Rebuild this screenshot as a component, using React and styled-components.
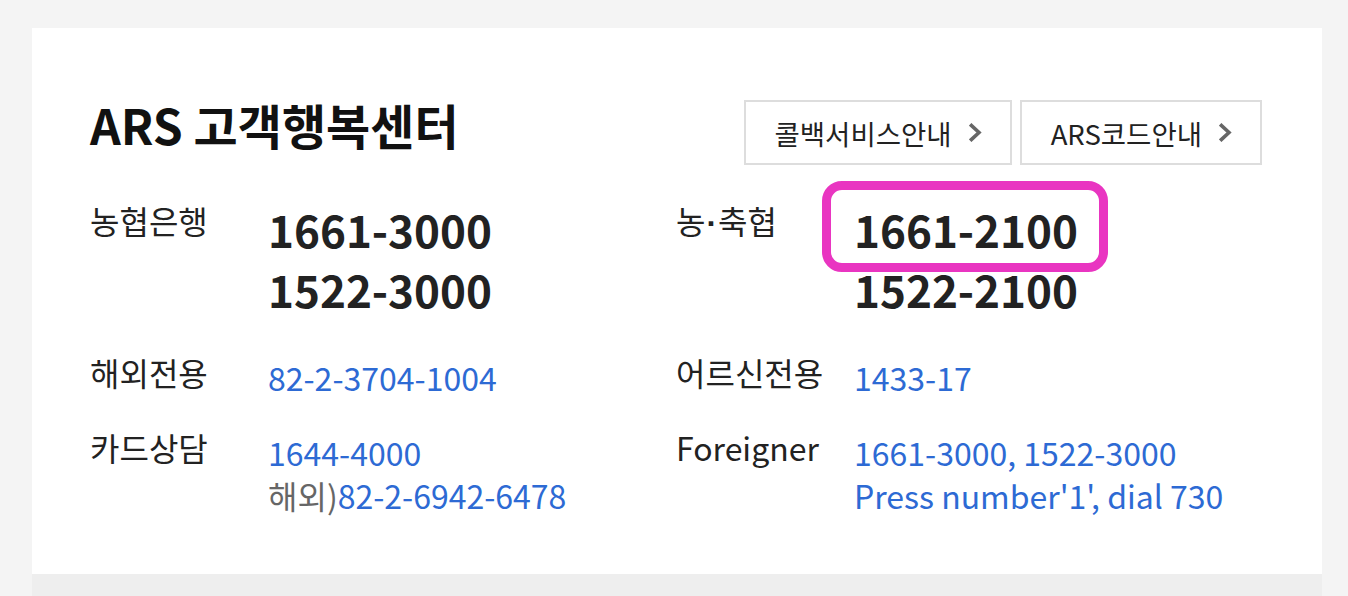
import React from 'react';
import styled, { createGlobalStyle } from 'styled-components';

const GlobalStyle = createGlobalStyle`
    body {
        margin: 0;
        background: #f4f4f4;
        font-family: "Noto Sans CJK KR", "Noto Sans", sans-serif;
        color: #222;
    }
`;

const Page = styled.div`
    padding: 28px 0 0 32px;
`;

const Card = styled.section`
    width: 1290px;
    box-sizing: border-box;
    padding: 72px 60px 57px 58px;
    background: #fff;
`;

const NextCard = styled.div`
    width: 1290px;
    height: 40px;
    background: #eeeeee;
`;

const Header = styled.div`
    display: flex;
    justify-content: space-between;
    align-items: flex-start;
`;

const Title = styled.h2`
    margin: 0;
    font-size: 48px;
    line-height: 48px;
    font-weight: 700;
    color: #111;
`;

const Buttons = styled.div`
    display: flex;
    gap: 8px;
`;

const LinkButton = styled.a`
    display: flex;
    align-items: center;
    gap: 17px;
    box-sizing: border-box;
    height: 65px;
    padding: 0 28px 0 29px;
    border: 2px solid #dddddd;
    background: #fff;
    font-size: 27.5px;
    color: #222;
    text-decoration: none;
`;

const Grid = styled.div`
    display: grid;
    grid-template-columns: 1fr 1fr;
    row-gap: 27px;
    margin-top: 34px;
`;

const Item = styled.div`
    display: flex;
    align-items: flex-start;
`;

const Label = styled.div`
    flex: 0 0 178px;
    font-size: 32px;
    line-height: 42px;
    color: #222;
`;

const Dot = styled.span`
    font-family: "Liberation Sans", sans-serif;
    font-weight: 700;
    margin: 0 1px;
`;

const Values = styled.div`
    display: flex;
    flex-direction: column;
    padding-top: ${({ $big }) => ($big ? '0' : '5px')};
    padding-bottom: ${({ $big }) => ($big ? '5px' : '0')};
`;

const BigNumber = styled.span`
    position: relative;
    align-self: flex-start;
    font-size: 44px;
    line-height: 60px;
    font-weight: 700;
    color: #222;
`;

const Highlight = styled.span`
    position: absolute;
    left: -32px;
    top: -18px;
    right: -30px;
    bottom: -13px;
    border: 9px solid #e935c1;
    border-radius: 20px;
    pointer-events: none;
`;

const Line = styled.span`
    font-size: 32px;
    line-height: 43px;
    color: ${({ $muted }) => ($muted ? '#666' : '#2d6ad4')};
`;

const Blue = styled.span`
    color: #2d6ad4;
`;

const Chevron = () => (
    <svg width="13" height="19" viewBox="0 0 13 19" fill="none">
        <path d="M2.5 2.5 L10 9.5 L2.5 16.5" stroke="#666" strokeWidth="3.6" strokeLinecap="square" />
    </svg>
);

const App = () => (
    <Page>
        <GlobalStyle />
        <Card>
            <Header>
                <Title>ARS 고객행복센터</Title>
                <Buttons>
                    <LinkButton href="#">콜백서비스안내 <Chevron /></LinkButton>
                    <LinkButton href="#">ARS코드안내 <Chevron /></LinkButton>
                </Buttons>
            </Header>
            <Grid>
                <Item>
                    <Label>농협은행</Label>
                    <Values $big>
                        <BigNumber>1661-3000</BigNumber>
                        <BigNumber>1522-3000</BigNumber>
                    </Values>
                </Item>
                <Item>
                    <Label>농<Dot>·</Dot>축협</Label>
                    <Values $big>
                        <BigNumber>
                            1661-2100
                            <Highlight />
                        </BigNumber>
                        <BigNumber>1522-2100</BigNumber>
                    </Values>
                </Item>
                <Item>
                    <Label>해외전용</Label>
                    <Values>
                        <Line>82-2-3704-1004</Line>
                    </Values>
                </Item>
                <Item>
                    <Label>어르신전용</Label>
                    <Values>
                        <Line>1433-17</Line>
                    </Values>
                </Item>
                <Item>
                    <Label>카드상담</Label>
                    <Values>
                        <Line>1644-4000</Line>
                        <Line $muted>해외)<Blue>82-2-6942-6478</Blue></Line>
                    </Values>
                </Item>
                <Item>
                    <Label>Foreigner</Label>
                    <Values>
                        <Line>1661-3000, 1522-3000</Line>
                        <Line>Press number'1', dial 730</Line>
                    </Values>
                </Item>
            </Grid>
        </Card>
        <NextCard />
    </Page>
);

export default App;
